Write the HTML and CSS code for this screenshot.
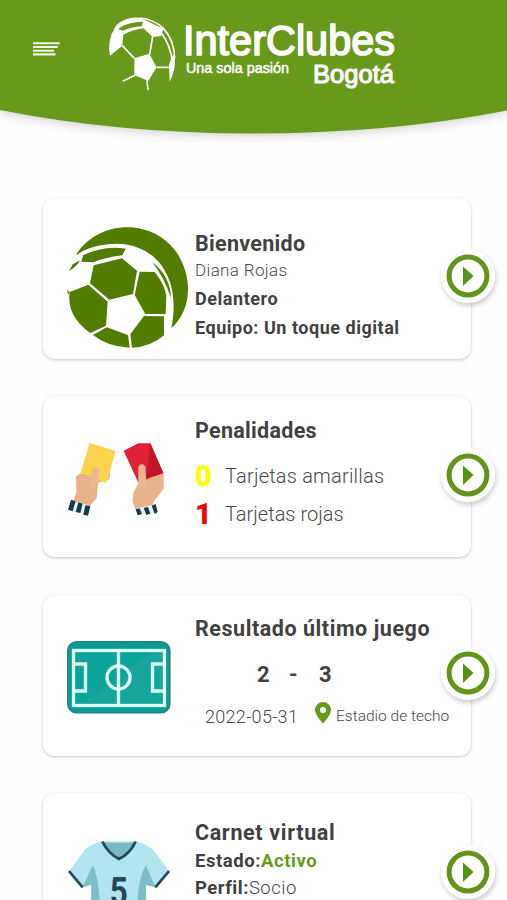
FILE: index.html
```html
<!DOCTYPE html>
<html lang="es">
<head>
<meta charset="utf-8">
<title>InterClubes Bogotá</title>
<link rel="stylesheet" href="styles.css">
</head>
<body>
<svg class="defs" width="0" height="0">
  <symbol id="go" viewBox="0 0 54 54">
    <circle cx="27" cy="27" r="27" fill="#fff"/>
    <circle cx="27" cy="27" r="18.900" fill="none" stroke="#649319" stroke-width="5"/>
    <path d="M22 17.500 32.500 27 22 37Z" fill="#569313"/>
  </symbol>
</svg>
<header class="header">
  <svg class="header-shape" viewBox="0 0 507 145"><path d="M0 0H507V110.500Q389 133.500 253 133.500Q118 133.500 0 110Z" fill="#67991a"/></svg>
  <div class="bar">
    <svg class="menu" viewBox="0 0 28 14"><path d="M0 1.200H26.500M0 5H25M0 8.800H21M0 12.400H22.500" stroke="#f2fae6" stroke-width="2.100"/></svg>
    <svg class="logo" viewBox="0 0 300 95">
      <g transform="scale(.33333)" fill="#fff" stroke="none">
        <path d="M55 78Q62 57 81 48Q105 35 135 38L205 71L198 93L173 96L145 70Q111 75 85 89L82 122L45 152Q38 117 50 86Z"/>
        <path d="M70 73Q86 53 144 50L140 64Q108 66 84 77Z" fill="#67991a"/>
        <path d="M118 160 163 146 185 187 160 228 118 210Z"/>
        <path d="M222 179 233 150H240Q243 195 224 230Z"/>
        <g fill="none" stroke="#fff" stroke-width="5"><path d="M135 39Q175 42 205 70Q238 105 239 160M197 80Q229 125 232 172M173 94 164 148M82 122 118 160M185 187H222M120 211 83 229M156 226 159 255"/></g>
      </g>
      <g fill="#fff" stroke="#fff" stroke-linejoin="round">
        <text class="logo-text" x="88" y="49.500" font-size="43" stroke-width="1.700" textLength="212" lengthAdjust="spacingAndGlyphs">InterClubes</text>
        <text class="logo-text" x="91" y="68" font-size="15.500" stroke-width=".5" textLength="103" lengthAdjust="spacingAndGlyphs">Una sola pasión</text>
        <text class="logo-text" x="218" y="77.500" font-size="26" stroke-width="1.100" textLength="81" lengthAdjust="spacingAndGlyphs">Bogotá</text>
      </g>
    </svg>
  </div>
</header>
<main class="cards">
  <section class="card">
    <div class="art"><svg width="122" height="122" viewBox="36 33 366 366">
      <path d="M65 122C130 13 300 5 373 120C422 205 405 292 352 340C382 195 313 89 190 86Q110 87 65 122Z" fill="#507c00"/>
      <g fill="#507c00">
        <path d="M87 121Q150 91 215 101L205 121Q150 128 118 142L82 140Z"/>
        <path d="M45 169 56 148 78 136Q72 151 45 169Z"/>
        <path d="M119 151 204 130 249 167 237 237 166 254 108 205Z"/>
        <path d="M257 170 302 171Q331 207 337 242L335 297H274L242 240Z"/>
        <path d="M47 231 103 209 161 260 156 332 109 354Q37 304 47 231Z"/>
        <path d="M117 360 158 337 222 360 227 398Q160 395 117 360Z"/>
        <path d="M234 398 229 358 270 303 330 304V361Q290 396 234 398Z"/>
        <path d="M294 141Q349 183 351 249Q331 187 294 141ZM39 224 47 231 43 240Z"/>
      </g></svg></div>
    <div class="info">
      <h2 class="title t-welcome">Bienvenido</h2>
      <p class="name">Diana Rojas</p>
      <p class="position">Delantero</p>
      <p class="team">Equipo: Un toque digital</p>
    </div>
    <svg class="go"><use href="#go"/></svg>
  </section>
  <section class="card">
    <div class="art hands"><svg width="104" height="82" viewBox="30 35 312 246">
      <path d="M63 141 74 133 158 130 167 131 162 151 129 160 125 206 103 232 55 216 64 188Z" fill="#e8b28b"/>
      <path d="M104 41 182 65 154 162 138 154 126 144 76 133Z" fill="#fcd34d"/>
      <path d="M107 141 112 120Q122 105 134 119L129 166 105 185Z" fill="#edb78f"/>
      <path d="M48 212 106 229 98 259 39 241Z" fill="#e4f4fa"/>
      <path d="M48 211 62 216 53 246 39 241ZM70 219 83 223 76 251 62 248ZM91 228 106 230 99 259 85 256Z" fill="#163a46"/>
      <path d="M249 132 326 130 326 178 295 218 293 237 242 243 233 216 235 190 250 163Z" fill="#e8b28b"/>
      <path d="M206 64 250 42H286L325 131 284 145 273 151 249 158Z" fill="#df2036"/>
      <path d="M286 42 325 131 274 148Z" fill="#c4142b"/>
      <path d="M250 162V113Q260 95 271 112L274 157 263 189Z" fill="#edb78f"/>
      <path d="M242 238 300 225 308 248 248 258Z" fill="#e4f4fa"/>
      <path d="M242 240 254 237 261 254 248 258ZM266 236 279 233 286 253 274 257ZM290 229 302 224 308 248 299 254Z" fill="#163a46"/>
    </svg></div>
    <div class="info">
      <h2 class="title t-penalties">Penalidades</h2>
      <p class="count first"><b class="yellow">0</b><span class="count-yellow">Tarjetas amarillas</span></p>
      <p class="count"><b class="red">1</b><span class="count-red">Tarjetas rojas</span></p>
    </div>
    <svg class="go"><use href="#go"/></svg>
  </section>
  <section class="card">
    <div class="art field"><svg width="104" height="73" viewBox="0 0 104 73">
      <rect x=".8" y=".8" width="102" height="71" rx="9" fill="#0b9b90" stroke="#248186" stroke-width="1.600"/>
      <path d="M8 66 90 8H98V65H8Z" fill="#17a69b"/>
      <path d="M10 66 52 36 90 8H6V66Z" fill="#0ba49a"/>
      <g fill="none" stroke="#ddfffc" stroke-width="3.300"><rect x="6.500" y="9.500" width="91" height="55"/><path d="M51.500 9V64M7 23H18.500V50H7M97 23H85.500V50H97"/><circle cx="51.500" cy="36.500" r="11.500"/></g>
    </svg></div>
    <div class="info">
      <h2 class="title t-result">Resultado último juego</h2>
      <p class="score"><span>2</span><span>-</span><span>3</span></p>
      <p class="match"><span class="date">2022-05-31</span><svg class="pin" viewBox="0 0 16 22"><path d="M8 0A8 8 0 0 0 0 8C0 13 8 21.500 8 21.500S16 13 16 8A8 8 0 0 0 8 0ZM8 5A3 3 0 1 1 8 11A3 3 0 0 1 8 5Z" fill="#67991a" fill-rule="evenodd"/></svg><span class="place">Estadio de techo</span></p>
    </div>
    <svg class="go"><use href="#go"/></svg>
  </section>
  <section class="card">
    <div class="art shirt"><svg width="102" height="101" viewBox="114 150 306 303">
      <path d="M214 154 319 154Q354 164 373 184L417 242 376 291 348 282V450H184V282L158 292 117 245 163 181Q180 164 214 154Z" fill="#b2e5ef"/>
      <path d="M188 226Q205 260 209 330V450H184V285L158 292ZM348 226Q326 260 323 330V450H348V285L376 291Z" fill="#7dbdc7"/>
      <path d="M219 157Q265 160 315 157L294 188 267 205 240 190Z" fill="#79bac5"/>
      <path d="M217 155Q236 192 267 207Q299 192 317 155M117 243 158 292M417 243 376 292" fill="none" stroke="#24475a" stroke-width="8"/>
      <text class="shirt-number" x="239" y="345" font-size="118" textLength="54" lengthAdjust="spacingAndGlyphs">5</text>
    </svg></div>
    <div class="info">
      <h2 class="title t-pass">Carnet virtual</h2>
      <p class="status"><b>Estado:</b><b class="active">Activo</b></p>
      <p class="profile"><b>Perfil:</b>Socio</p>
    </div>
    <svg class="go"><use href="#go"/></svg>
  </section>
</main>
</body>
</html>
```
FILE: styles.css
```css
* { box-sizing: border-box; }
html, body { height: 100%; overflow: hidden; }
body { margin: 0; background: #fefefe; color: #414141; font-family: Roboto, "Liberation Sans", sans-serif; }
.defs { position: absolute; }
h2, p { margin: 0; white-space: nowrap; }
svg { display: block; flex: none; }
.header { position: relative; height: 197.500px; }
.header-shape { position: absolute; inset: 0 auto auto 0; width: 507px; height: 145px; overflow: visible; filter: drop-shadow(0 3px 5px rgba(0,0,0,.16)); }
.bar { position: relative; display: flex; align-items: flex-start; padding: 5px 0 0 33px; }
.menu { width: 28px; height: 14px; margin: 36.500px 34px 0 0; }
.logo { width: 300px; height: 95px; overflow: visible; }
.logo-text { font-family: "Liberation Sans", sans-serif; }
.cards { display: grid; gap: 37.500px; padding: 0 36px 0 43px; }
.card { position: relative; display: grid; grid-template-columns: 152px 1fr; height: 161px; border-radius: 12px; background: #fff; box-shadow: 0 1px 3px rgba(0,0,0,.24); }
.art { display: flex; align-items: center; padding-left: 23px; padding-top: 17px; }
.art.hands { padding-top: 11px; padding-left: 22px; }
.art.field { padding: 5px 0 0 24px; }
.art.shirt { align-items: flex-start; padding-top: 47px; padding-left: 25px; }
.shirt-number { font-family: Roboto, sans-serif; font-weight: 700; fill: #24475a; }
.go { position: absolute; right: -23.500px; top: 51.500px; width: 54px; height: 54px; border-radius: 50%; box-shadow: 1px 3px 5px rgba(0,0,0,.2); }
.title { font-size: 21.500px; line-height: 28px; font-weight: 700; }
.t-welcome { margin-top: 32px; letter-spacing: .3px; }
.name { margin-top: -1px; font-size: 17px; line-height: 26px; font-weight: 300; letter-spacing: .35px; }
.position { margin-top: 2px; font-size: 18px; line-height: 28px; font-weight: 700; letter-spacing: .55px; }
.team { margin-top: 1px; font-size: 18px; line-height: 28px; font-weight: 700; letter-spacing: .52px; }
.t-penalties { margin-top: 20.500px; letter-spacing: .3px; }
.count { display: grid; grid-template-columns: 30px auto; align-items: center; height: 38px; font-size: 20px; font-weight: 300; }
.count.first { margin-top: 12px; }
.count b { font-size: 29px; font-weight: 900; }
.count-yellow { letter-spacing: .2px; }
.yellow { color: #ff0; }
.red { color: #e80707; }
.t-result { margin-top: 20px; letter-spacing: .55px; }
.score { display: grid; grid-template-columns: 32px 30px 14px; padding-left: 62px; margin-top: 17px; font-size: 22px; line-height: 30px; font-weight: 700; }
.match { display: flex; align-items: center; padding-left: 10px; margin-top: 13px; height: 26px; }
.date { width: 110px; padding-top: 2px; font-size: 18px; font-weight: 300; letter-spacing: .3px; }
.pin { width: 16px; height: 22px; margin: -5px 5px 0 0; }
.place { font-size: 15.500px; font-weight: 300; }
.t-pass { margin-top: 26px; letter-spacing: .65px; }
.status { font-size: 18.500px; line-height: 27px; margin-top: 1px; letter-spacing: .55px; }
.active { color: #67991a; }
.profile { font-size: 18.500px; line-height: 27px; font-weight: 300; letter-spacing: .5px; }
.profile b { font-weight: 700; }
.name, .count span, .date, .place { color: #484848; }
```
